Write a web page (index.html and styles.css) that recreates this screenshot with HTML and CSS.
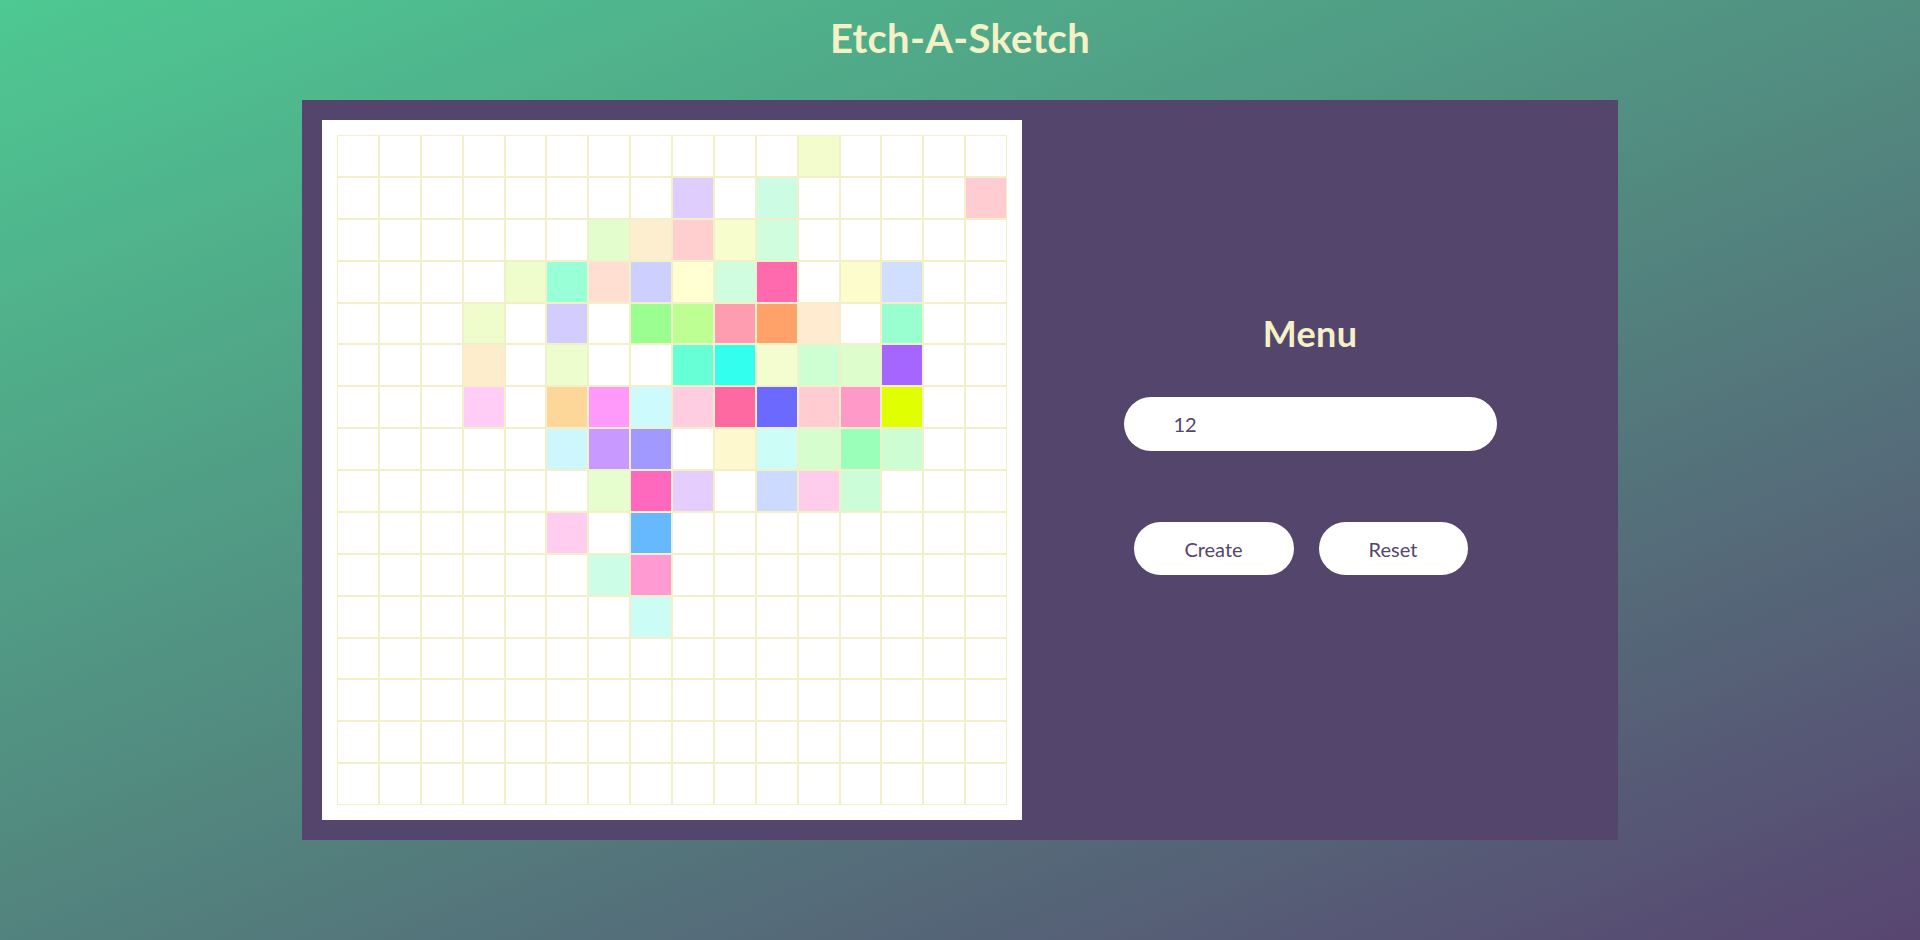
FILE: index.html
```html
<!DOCTYPE html>
<html lang="en">
<head>
<meta charset="utf-8">
<title>Etch-A-Sketch</title>
<link rel="stylesheet" href="styles.css">
</head>
<body>
<h1 class="title">Etch-A-Sketch</h1>
<main class="panel">
  <section class="board">
    <div class="grid">
<div class="cell"></div><div class="cell"></div><div class="cell"></div><div class="cell"></div><div class="cell"></div><div class="cell"></div><div class="cell"></div><div class="cell"></div><div class="cell"></div><div class="cell"></div><div class="cell"></div><div class="cell" style="background:#f2fccc"></div><div class="cell"></div><div class="cell"></div><div class="cell"></div><div class="cell"></div>
<div class="cell"></div><div class="cell"></div><div class="cell"></div><div class="cell"></div><div class="cell"></div><div class="cell"></div><div class="cell"></div><div class="cell"></div><div class="cell" style="background:#decdfd"></div><div class="cell"></div><div class="cell" style="background:#ccfde4"></div><div class="cell"></div><div class="cell"></div><div class="cell"></div><div class="cell"></div><div class="cell" style="background:#ffcdd1"></div>
<div class="cell"></div><div class="cell"></div><div class="cell"></div><div class="cell"></div><div class="cell"></div><div class="cell"></div><div class="cell" style="background:#e4fdcd"></div><div class="cell" style="background:#fdeecf"></div><div class="cell" style="background:#ffcfcf"></div><div class="cell" style="background:#f7fdcd"></div><div class="cell" style="background:#cffddd"></div><div class="cell"></div><div class="cell"></div><div class="cell"></div><div class="cell"></div><div class="cell"></div>
<div class="cell"></div><div class="cell"></div><div class="cell"></div><div class="cell"></div><div class="cell" style="background:#effdcd"></div><div class="cell" style="background:#99ffd6"></div><div class="cell" style="background:#ffdfd1"></div><div class="cell" style="background:#cdd0ff"></div><div class="cell" style="background:#ffffd2"></div><div class="cell" style="background:#d0fde0"></div><div class="cell" style="background:#ff69ae"></div><div class="cell"></div><div class="cell" style="background:#fdfccc"></div><div class="cell" style="background:#d0dfff"></div><div class="cell"></div><div class="cell"></div>
<div class="cell"></div><div class="cell"></div><div class="cell"></div><div class="cell" style="background:#effdcd"></div><div class="cell"></div><div class="cell" style="background:#d3ccff"></div><div class="cell"></div><div class="cell" style="background:#9aff90"></div><div class="cell" style="background:#beff94"></div><div class="cell" style="background:#ff9db0"></div><div class="cell" style="background:#ffa26a"></div><div class="cell" style="background:#ffebcf"></div><div class="cell"></div><div class="cell" style="background:#9affd0"></div><div class="cell"></div><div class="cell"></div>
<div class="cell"></div><div class="cell"></div><div class="cell"></div><div class="cell" style="background:#feedcd"></div><div class="cell"></div><div class="cell" style="background:#edfdcd"></div><div class="cell"></div><div class="cell"></div><div class="cell" style="background:#66ffd6"></div><div class="cell" style="background:#33ffee"></div><div class="cell" style="background:#f4fdd0"></div><div class="cell" style="background:#cdffd2"></div><div class="cell" style="background:#ddfdcd"></div><div class="cell" style="background:#a566ff"></div><div class="cell"></div><div class="cell"></div>
<div class="cell"></div><div class="cell"></div><div class="cell"></div><div class="cell" style="background:#ffcdf5"></div><div class="cell"></div><div class="cell" style="background:#fdd69a"></div><div class="cell" style="background:#ff99fa"></div><div class="cell" style="background:#ccfafd"></div><div class="cell" style="background:#ffcde0"></div><div class="cell" style="background:#ff69a2"></div><div class="cell" style="background:#6b69ff"></div><div class="cell" style="background:#ffcdd1"></div><div class="cell" style="background:#ff9ac8"></div><div class="cell" style="background:#e0ff00"></div><div class="cell"></div><div class="cell"></div>
<div class="cell"></div><div class="cell"></div><div class="cell"></div><div class="cell"></div><div class="cell"></div><div class="cell" style="background:#cdf6fd"></div><div class="cell" style="background:#c899ff"></div><div class="cell" style="background:#a199ff"></div><div class="cell"></div><div class="cell" style="background:#fdf8cd"></div><div class="cell" style="background:#ccfdf6"></div><div class="cell" style="background:#d5fdcd"></div><div class="cell" style="background:#9affb8"></div><div class="cell" style="background:#cdfdd3"></div><div class="cell"></div><div class="cell"></div>
<div class="cell"></div><div class="cell"></div><div class="cell"></div><div class="cell"></div><div class="cell"></div><div class="cell"></div><div class="cell" style="background:#e6fdcd"></div><div class="cell" style="background:#ff69bd"></div><div class="cell" style="background:#e5cdfd"></div><div class="cell"></div><div class="cell" style="background:#cddaff"></div><div class="cell" style="background:#ffcdec"></div><div class="cell" style="background:#ccfdd9"></div><div class="cell"></div><div class="cell"></div><div class="cell"></div>
<div class="cell"></div><div class="cell"></div><div class="cell"></div><div class="cell"></div><div class="cell"></div><div class="cell" style="background:#ffcdf0"></div><div class="cell"></div><div class="cell" style="background:#66b8ff"></div><div class="cell"></div><div class="cell"></div><div class="cell"></div><div class="cell"></div><div class="cell"></div><div class="cell"></div><div class="cell"></div><div class="cell"></div>
<div class="cell"></div><div class="cell"></div><div class="cell"></div><div class="cell"></div><div class="cell"></div><div class="cell"></div><div class="cell" style="background:#ccfde6"></div><div class="cell" style="background:#ff9ad2"></div><div class="cell"></div><div class="cell"></div><div class="cell"></div><div class="cell"></div><div class="cell"></div><div class="cell"></div><div class="cell"></div><div class="cell"></div>
<div class="cell"></div><div class="cell"></div><div class="cell"></div><div class="cell"></div><div class="cell"></div><div class="cell"></div><div class="cell"></div><div class="cell" style="background:#ccfdf4"></div><div class="cell"></div><div class="cell"></div><div class="cell"></div><div class="cell"></div><div class="cell"></div><div class="cell"></div><div class="cell"></div><div class="cell"></div>
<div class="cell"></div><div class="cell"></div><div class="cell"></div><div class="cell"></div><div class="cell"></div><div class="cell"></div><div class="cell"></div><div class="cell"></div><div class="cell"></div><div class="cell"></div><div class="cell"></div><div class="cell"></div><div class="cell"></div><div class="cell"></div><div class="cell"></div><div class="cell"></div>
<div class="cell"></div><div class="cell"></div><div class="cell"></div><div class="cell"></div><div class="cell"></div><div class="cell"></div><div class="cell"></div><div class="cell"></div><div class="cell"></div><div class="cell"></div><div class="cell"></div><div class="cell"></div><div class="cell"></div><div class="cell"></div><div class="cell"></div><div class="cell"></div>
<div class="cell"></div><div class="cell"></div><div class="cell"></div><div class="cell"></div><div class="cell"></div><div class="cell"></div><div class="cell"></div><div class="cell"></div><div class="cell"></div><div class="cell"></div><div class="cell"></div><div class="cell"></div><div class="cell"></div><div class="cell"></div><div class="cell"></div><div class="cell"></div>
<div class="cell"></div><div class="cell"></div><div class="cell"></div><div class="cell"></div><div class="cell"></div><div class="cell"></div><div class="cell"></div><div class="cell"></div><div class="cell"></div><div class="cell"></div><div class="cell"></div><div class="cell"></div><div class="cell"></div><div class="cell"></div><div class="cell"></div><div class="cell"></div>
    </div>
  </section>
  <section class="menu">
    <h2 class="menu-title">Menu</h2>
    <input class="size-input" type="text" value="12">
    <div class="actions">
      <button class="btn btn-create" type="button">Create</button>
      <button class="btn btn-reset" type="button">Reset</button>
    </div>
  </section>
</main>
</body>
</html>
```

FILE: styles.css
```css
* {
  box-sizing: border-box;
}

html, body {
  margin: 0;
  padding: 0;
}

body {
  width: 1920px;
  height: 940px;
  overflow: hidden;
  font-family: "Lato", "Open Sans", sans-serif;
  background: linear-gradient(158deg, #4ec992 0%, #52897f 50%, #584571 100%);
}

.title {
  margin: 14px 0 38px;
  height: 48px;
  line-height: 48px;
  text-align: center;
  font-size: 40px;
  font-weight: 700;
  color: #f5f1c7;
  letter-spacing: 0.3px;
}

.panel {
  width: 1316px;
  height: 740px;
  margin: 0 auto;
  padding: 20px;
  display: flex;
  background: #54456c;
}

.board {
  width: 700px;
  height: 700px;
  padding: 15px;
  background: #ffffff;
  flex: none;
}

.grid {
  width: 670px;
  height: 670px;
  display: grid;
  grid-template-columns: repeat(16, 1fr);
  grid-template-rows: repeat(16, 1fr);
}

.cell {
  border: 1px solid #f2f0c9;
  background: #ffffff;
}

.menu {
  flex: 1;
  display: flex;
  flex-direction: column;
  align-items: center;
  padding-top: 191px;
}

.menu-title {
  margin: 0 0 42px;
  height: 44px;
  line-height: 44px;
  font-size: 36px;
  font-weight: 700;
  color: #f5f1c7;
  letter-spacing: 0.3px;
}

.size-input {
  width: 373px;
  height: 54px;
  border: none;
  border-radius: 27px;
  padding: 0 20px 0 50px;
  font-family: "Lato", sans-serif;
  font-size: 20px;
  color: #54456c;
  background: #ffffff;
  outline: none;
}

.actions {
  width: 373px;
  margin-top: 71px;
  padding-left: 10px;
  display: flex;
  gap: 25px;
}

.btn {
  height: 53px;
  border: none;
  border-radius: 27px;
  background: #ffffff;
  color: #54456c;
  font-family: "Lato", sans-serif;
  font-size: 20px;
  padding: 0;
  cursor: pointer;
}

.btn-create {
  width: 160px;
}

.btn-reset {
  width: 149px;
}
```
